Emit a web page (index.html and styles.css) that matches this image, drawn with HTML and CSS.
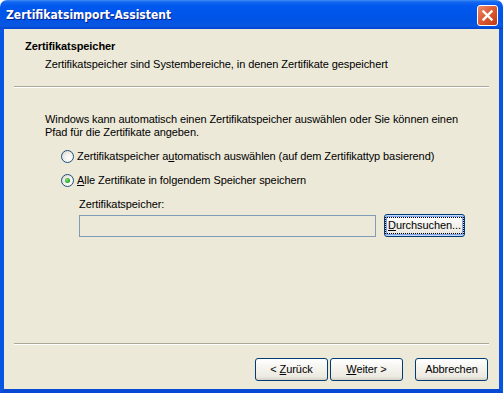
FILE: index.html
```html
<!DOCTYPE html>
<html lang="de">
<head>
  <meta charset="UTF-8">
  <title>Zertifikatsimport-Assistent</title>
  <link rel="stylesheet" href="styles.css">
</head>
<body>

  <div class="window">
    <div class="titlebar">
      <span class="title">Zertifikatsimport-Assistent</span>
      <div class="close">
        <svg width="13" height="13" viewBox="0 0 13 13">
          <path d="M2.5 2.5 L10.5 10.5 M10.5 2.5 L2.5 10.5" stroke="#fff" stroke-width="2.4" stroke-linecap="square"/>
        </svg>
      </div>
    </div>

    <div class="frame">
      <div class="client">
        <div class="header">
          <div class="header-title">Zertifikatspeicher</div>
          <div class="header-sub">Zertifikatspeicher sind Systembereiche, in denen Zertifikate gespeichert</div>
        </div>
        <div class="sep"></div>

        <div class="content">
          <p class="intro">Windows kann automatisch einen Zertifikatspeicher auswählen oder Sie können einen Pfad für die Zertifikate angeben.</p>

          <div class="radio">
            <span class="radio-box"></span>
            <span>Zertifikatspeicher a<u>u</u>tomatisch auswählen (auf dem Zertifikattyp basierend)</span>
          </div>
          <div class="radio">
            <span class="radio-box checked"></span>
            <span><u>A</u>lle Zertifikate in folgendem Speicher speichern</span>
          </div>

          <div class="store">
            <div class="store-label">Zertifikatspeicher:</div>
            <div class="store-row">
              <div class="store-input"></div>
              <div class="btn btn-default"><span class="focus"><u>D</u>urchsuchen...</span></div>
            </div>
          </div>
        </div>

        <div class="sep sep-bottom"></div>

        <div class="footer">
          <div class="btn"><span>&lt; <u>Z</u>urück</span></div>
          <div class="btn btn-next"><span><u>W</u>eiter &gt;</span></div>
          <div class="btn"><span>Abbrechen</span></div>
        </div>
      </div>
    </div>
  </div>

</body>
</html>
```

FILE: styles.css
```css
body {
  margin: 0;
  padding: 0;
  font-family: "Liberation Sans", Arial, sans-serif;
  font-size: 11px;
  letter-spacing: -0.08px;
  color: black;
  background-color: white;
}

.window {
  width: 503px;
  height: 393px;
  display: flex;
  flex-direction: column;
}

.titlebar {
  height: 29px;
  display: flex;
  align-items: center;
  justify-content: space-between;
  padding: 0 5px 0 6px;
  border-radius: 7px 7px 0 0;
  background: linear-gradient(to bottom, #3d8ff5 0px, #1466f0 2px, #0058ee 6px, #0054e6 20px, #0a57e0 26px, #0043cf 29px);
}

.title {
  color: white;
  font-family: "DejaVu Sans Condensed", "DejaVu Sans", sans-serif;
  font-stretch: condensed;
  font-weight: bold;
  font-size: 12px;
  letter-spacing: 0;
  text-shadow: 1px 1px 0 #0a1e8c;
  padding-top: 1px;
}

.close {
  width: 19px;
  height: 19px;
  border: 1px solid #fff;
  border-radius: 3px;
  display: flex;
  align-items: center;
  justify-content: center;
  background: linear-gradient(135deg, #eb8d6c 0%, #e0613a 40%, #cf4a20 75%, #b8391a 100%);
  margin-top: 1px;
}

.frame {
  flex: 1;
  display: flex;
  border-left: 4px solid #0855e3;
  border-right: 4px solid #0855e3;
  border-bottom: 4px solid #0849d3;
}

.client {
  flex: 1;
  display: flex;
  flex-direction: column;
  background-color: #ece9d8;
}

.header {
  padding: 11px 0 0 21px;
  height: 46px;
  box-sizing: border-box;
}

.header-title {
  font-weight: bold;
  line-height: 13px;
}

.header-sub {
  line-height: 13px;
  margin-top: 5px;
  padding-left: 20px;
}

.sep {
  margin: 11px 10px 0 10px;
  border-top: 1px solid #aca899;
  border-bottom: 1px solid #fff;
}

.content {
  flex: 1;
  padding: 25px 20px 0 41px;
}

.intro {
  margin: 0;
  line-height: 13px;
}

.radio {
  display: flex;
  align-items: center;
  gap: 3px;
  margin-top: 11px;
  padding-left: 16px;
  line-height: 13px;
}

.radio-box {
  width: 11px;
  height: 11px;
  border: 1px solid #1c5180;
  border-radius: 50%;
  background: radial-gradient(circle at 65% 65%, #ffffff 0%, #f4f3ee 40%, #d4d0c4 100%);
  display: flex;
  align-items: center;
  justify-content: center;
}

.radio-box.checked::after {
  content: "";
  width: 5px;
  height: 5px;
  border-radius: 50%;
  background: radial-gradient(circle at 40% 40%, #8ee28e 0%, #31b031 50%, #158a15 100%);
}

.store {
  margin-top: 11px;
  padding-left: 34px;
}

.store-label {
  line-height: 13px;
}

.store-row {
  display: flex;
  align-items: center;
  gap: 8px;
  margin-top: 3px;
}

.store-input {
  width: 295px;
  height: 20px;
  border: 1px solid #7f9db9;
  background-color: #ece9d8;
}

.btn {
  width: 71px;
  height: 21px;
  border: 1px solid #003c74;
  border-radius: 3px;
  display: flex;
  align-items: center;
  justify-content: center;
  background: linear-gradient(to bottom, #ffffff 0%, #f5f4ef 40%, #ebe9e1 85%, #d6d0c5 100%);
  line-height: 13px;
}

.btn-default {
  width: 79px;
  box-shadow: inset 0 0 0 1px #c4d9f7, inset 0 0 0 2px #7da2ea;
}

.focus {
  border: 1px dotted #000;
  padding: 1px 2px;
}

.sep-bottom {
  margin-top: 0;
}

.footer {
  display: flex;
  justify-content: flex-end;
  padding: 13px 11px 8px 0;
}

.btn-next {
  margin-left: 2px;
  margin-right: 12px;
}
```
